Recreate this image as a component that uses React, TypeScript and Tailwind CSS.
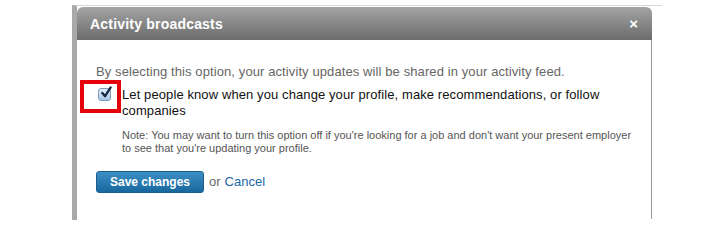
import React from "react";

export default function App() {
  return (
    <div
      className="relative w-[724px] h-[224px] bg-white overflow-hidden"
      style={{ fontFamily: '"Liberation Sans", Arial, Helvetica, sans-serif' }}
    >
      <div className="pl-[72px] pt-[5px]">
        <div className="w-[590px] h-[215px] border-t border-t-[#d6d6d6] border-l-[5px] border-l-[#a8a8a8] pt-[1px]">
          <div className="w-[575px] h-[212px] flex flex-col">
            <div className="h-[33px] rounded-t-[6px] bg-gradient-to-b from-[#a4a4a4] to-[#6c6c6c] flex items-center justify-between pl-[13px] pr-[14px]">
              <span className="text-white font-bold text-[14px] leading-none tracking-[0.2px]">Activity broadcasts</span>
              <span className="text-white font-bold text-[15px] leading-none">×</span>
            </div>
            <div className="flex-1 border-r border-r-[#9a9a9a] pl-[19px] pt-[24px]">
              <p className="text-[13px] leading-[16px] text-[#666666] tracking-[0.1px]">
                By selecting this option, your activity updates will be shared in your activity feed.
              </p>
              <div className="mt-[7px] flex items-start">
                <span className="relative mt-[1px] ml-[2px] mr-[11px] w-[13px] h-[13px] shrink-0 rounded-[3px] border border-[#7d9cc0] bg-gradient-to-b from-[#e4eefa] to-[#a9c6e8]">
                  <svg
                    viewBox="0 0 14 14"
                    className="absolute left-[1px] top-[-3px] w-[13px] h-[13px]"
                  >
                    <path
                      d="M2.5 7.5 L5.5 11 L11.5 1.5"
                      fill="none"
                      stroke="#17263f"
                      strokeWidth="2.4"
                      strokeLinecap="round"
                      strokeLinejoin="round"
                    />
                  </svg>
                </span>
                <p className="text-[13px] leading-[16px] text-[#111111] w-[490px] tracking-[0.1px]">
                  Let people know when you change your profile, make recommendations, or follow companies
                </p>
              </div>
              <p className="mt-[10px] ml-[26px] text-[11px] leading-[13px] text-[#555555] w-[512px]">
                Note: You may want to turn this option off if you're looking for a job and don't want your present employer to see that you're updating your profile.
              </p>
              <div className="mt-[16px] flex items-center">
                <button className="h-[22px] px-[13px] rounded-[3px] border border-[#1c5e8f] bg-gradient-to-b from-[#3d8fc6] to-[#17679f] text-white font-bold text-[12px] leading-none">
                  Save changes
                </button>
                <span className="ml-[5px] text-[13px] text-[#666666]">or</span>
                <span className="ml-[4px] text-[13px] text-[#1a67a6]">Cancel</span>
              </div>
            </div>
          </div>
        </div>
      </div>
      <div className="absolute left-[80px] top-[80px] w-[41px] h-[33px] border-[4px] border-[#e5000b]" />
    </div>
  );
}
